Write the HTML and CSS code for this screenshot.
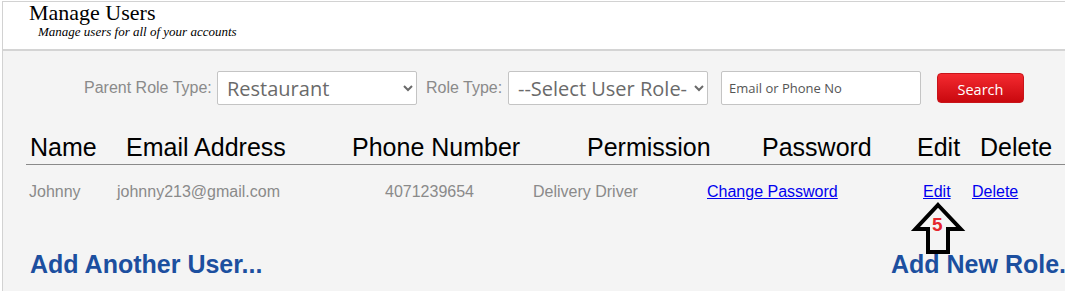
FILE: index.html
```html
<!DOCTYPE html>
<html lang="en">
<head>
<meta charset="utf-8">
<title>Manage Users</title>
<link rel="stylesheet" href="styles.css">
</head>
<body>
<div class="page">
  <header class="head">
    <h1 class="title">Manage Users</h1>
    <p class="subtitle">Manage users for all of your accounts</p>
  </header>
  <main class="content">
    <form class="filters">
      <label class="flabel lbl1">Parent Role Type:</label>
      <select class="fselect"><option>Restaurant</option></select>
      <label class="flabel lbl2">Role Type:</label>
      <select class="fselect"><option>--Select User Role--</option></select>
      <input class="finput" type="text" placeholder="Email or Phone No">
      <button class="search" type="button">Search</button>
    </form>
    <div class="users">
      <div class="thead">
        <div>Name</div>
        <div>Email Address</div>
        <div>Phone Number</div>
        <div>Permission</div>
        <div>Password</div>
        <div>Edit</div>
        <div>Delete</div>
      </div>
      <div class="trow">
        <div>Johnny</div>
        <div>johnny213@gmail.com</div>
        <div>4071239654</div>
        <div>Delivery Driver</div>
        <div><a class="link" href="#">Change Password</a></div>
        <div><a class="link" href="#">Edit</a></div>
        <div><a class="link" href="#">Delete</a></div>
      </div>
    </div>
    <div class="adds">
      <a class="add" href="#">Add Another User...</a>
      <a class="add" href="#">Add New Role...</a>
    </div>
  </main>
</div>
<svg class="pointer" width="56" height="62" viewBox="0 0 56 62" aria-hidden="true">
  <polygon points="28,9 50.7,33 38,33 38,56 18,56 18,33 5.5,33" fill="none" stroke="#000" stroke-width="4" stroke-linejoin="miter"/>
</svg>
<span class="step">5</span>
</body>
</html>
```

FILE: styles.css
```css
html, body {
  margin: 0;
  padding: 0;
  overflow: hidden;
  background: #ffffff;
}

body {
  position: relative;
  width: 1065px;
  height: 291px;
  font-family: "Liberation Sans", Arial, sans-serif;
}

.page {
  margin: 1px 0 0 2px;
  border-top: 1px solid #d2d2d2;
  border-left: 1px solid #d2d2d2;
  width: 1200px;
  height: 300px;
  background: #f4f4f4;
}

.head {
  height: 47px;
  background: #ffffff;
  border-bottom: 2px solid #d4d4d4;
  padding-left: 26px;
  font-family: "Liberation Serif", "Times New Roman", serif;
  color: #000;
}

.title {
  margin: 0;
  font-size: 22px;
  line-height: 22px;
  font-weight: normal;
}

.subtitle {
  margin: 1px 0 0 9px;
  font-size: 13px;
  line-height: 14px;
  font-style: italic;
}

.filters {
  display: flex;
  align-items: center;
  height: 34px;
  margin: 0;
  padding: 20px 0 0 81px;
}

.flabel {
  font-size: 16px;
  color: #8a8a8a;
  margin-right: 5px;
  white-space: nowrap;
}

.lbl1 {
  width: 128px;
}

.lbl2 {
  width: 77px;
  margin-left: 9px;
}

.fselect {
  width: 200px;
  height: 34px;
  box-sizing: border-box;
  border: 1px solid #c4c4c4;
  border-radius: 2px;
  background: #ffffff;
  font-family: "Open Sans", sans-serif;
  font-size: 20px;
  color: #6a6a6a;
  padding: 0 4px 0 5px;
}

.finput {
  width: 200px;
  height: 34px;
  box-sizing: border-box;
  margin-left: 13px;
  border: 1px solid #c4c4c4;
  border-radius: 2px;
  background: #ffffff;
  padding: 0 7px;
  font-family: "Open Sans", sans-serif;
  font-size: 13px;
}

.finput::placeholder {
  color: #555555;
}

.search {
  margin-left: 16px;
  width: 87px;
  height: 30px;
  border: 1px solid #c9141a;
  border-radius: 4px;
  background: linear-gradient(#f42a30, #c9080e);
  color: #ffffff;
  font-family: "Open Sans", sans-serif;
  font-size: 14.5px;
  padding: 2px 0 0;
}

.users {
  margin: 27px 0 0 23px;
}

.thead {
  display: grid;
  grid-template-columns: 96px 226px 235px 175px 155px 63px auto;
  padding: 0 0 2px 4px;
  border-bottom: 1px solid #8a8a8a;
  font-size: 25px;
  line-height: 30px;
  color: #000;
}

.trow {
  display: grid;
  grid-template-columns: 88px 268px 148px 174px 216px 49px auto;
  padding: 17px 0 0 3px;
  font-size: 16px;
  line-height: 20px;
  color: #8a8a8a;
}

.link {
  color: #0000ee;
  text-decoration: underline;
}

.adds {
  display: grid;
  grid-template-columns: 861px max-content;
  margin-top: 47px;
  padding-left: 27px;
}

.add {
  font-size: 25px;
  line-height: 30px;
  font-weight: bold;
  color: #1c4f9f;
  text-decoration: none;
  white-space: nowrap;
}

.pointer {
  position: absolute;
  left: 910px;
  top: 196px;
}

.step {
  position: absolute;
  left: 932px;
  top: 215px;
  font-size: 19px;
  line-height: 20px;
  font-weight: bold;
  color: #e5262c;
}
```
